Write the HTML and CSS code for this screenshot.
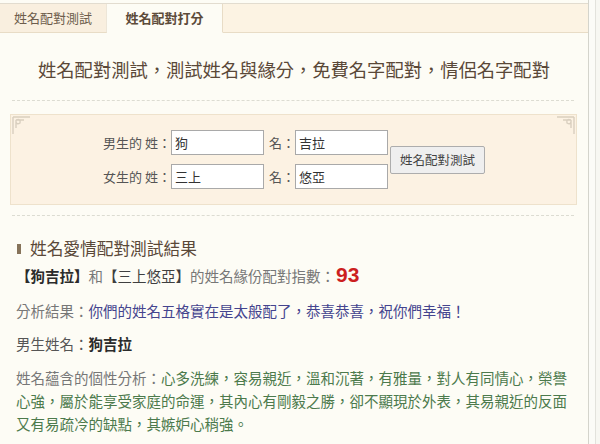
FILE: index.html
```html
<!DOCTYPE html>
<html lang="zh-Hant">
<head>
<meta charset="utf-8">
<title>姓名配對打分</title>
<link rel="stylesheet" href="styles.css">
</head>
<body>
<div class="page">
  <div class="tabs">
    <div class="tab">姓名配對測試</div>
    <div class="tab active">姓名配對打分</div>
    <div class="tab-fill"></div>
  </div>

  <h1 class="title">姓名配對測試，測試姓名與緣分，免費名字配對，情侶名字配對</h1>

  <div class="dash"></div>

  <div class="panel">
    <svg class="corner corner-l" width="20" height="20" viewBox="0 0 20 20"><path d="M1 1 H18 M1 1 V18 M4 4 H12 M4 4 V12 M4 4 Q9 2 8 7 Q5 9 4 6" fill="none" stroke="#d9cfbf" stroke-width="1.4"/></svg>
    <svg class="corner corner-r" width="20" height="20" viewBox="0 0 20 20"><path d="M19 1 H2 M19 1 V18 M16 4 H8 M16 4 V12 M16 4 Q11 2 12 7 Q15 9 16 6" fill="none" stroke="#d9cfbf" stroke-width="1.4"/></svg>
    <form class="form">
      <div class="grid">
        <label class="lbl">男生的 姓：</label>
        <input class="inp" type="text" value="狗">
        <label class="lbl2">名：</label>
        <input class="inp" type="text" value="吉拉">
        <label class="lbl">女生的 姓：</label>
        <input class="inp" type="text" value="三上">
        <label class="lbl2">名：</label>
        <input class="inp" type="text" value="悠亞">
      </div>
      <button class="btn" type="button">姓名配對測試</button>
    </form>
  </div>

  <div class="dash"></div>

  <section class="result">
    <h2 class="heading"><span class="bar"></span>姓名愛情配對測試結果</h2>
    <p class="line"><b class="dark">【狗吉拉】</b><span class="gray">和</span><span class="mid">【三上悠亞】</span><span class="gray">的姓名緣份配對指數：</span><span class="score">93</span></p>
    <p class="line l2"><span class="gray">分析結果：</span><span class="blue">你們的姓名五格實在是太般配了，恭喜恭喜，祝你們幸福！</span></p>
    <p class="line l3"><span class="gray2">男生姓名：</span><b class="dark">狗吉拉</b></p>
    <p class="line para"><span class="gray">姓名蘊含的個性分析：</span><span class="green">心多洗練，容易親近，溫和沉著，有雅量，對人有同情心，榮譽心強，屬於能享受家庭的命運，其內心有剛毅之勝，卻不顯現於外表，其易親近的反面又有易疏冷的缺點，其嫉妒心稍強。</span></p>
  </section>
</div>
</body>
</html>
```

FILE: styles.css
```css
html, body {
  margin: 0;
  padding: 0;
}
body {
  background: #f7f7f2;
  font-family: "Noto Sans CJK TC", "Noto Sans", sans-serif;
  width: 600px;
  height: 444px;
  overflow: hidden;
}
.page {
  width: 589px;
  height: 444px;
  background: #fdfcf5;
  border-right: 1px solid #d4d4cc;
  box-shadow: 6px 0 0 #fbfbf7, 7px 0 0 #e2e2dc;
  padding-top: 3px;
  box-sizing: border-box;
}
.tabs {
  display: flex;
  height: 30px;
  border-top: 1px solid #e2dccf;
  background: #fcf3e3;
  box-sizing: border-box;
}
.tab {
  width: 106px;
  font-size: 13px;
  line-height: 28px;
  text-align: center;
  color: #6d5d4c;
  background: #f9efdf;
  border-right: 1px solid #ede6d8;
  border-bottom: 1px solid #e8dcc6;
}
.tab.active {
  width: 115px;
  background: #fdfcf5;
  font-weight: bold;
  color: #5c4b3a;
  border-right: 1px solid #e8dcc6;
  border-bottom: 1px solid #fdfcf5;
}
.tab-fill {
  flex: 1;
  border-bottom: 1px solid #e8dcc6;
}
.title {
  margin: 24px 0 19px;
  font-size: 18.3px;
  line-height: 24px;
  font-weight: normal;
  color: #5a4838;
  text-align: center;
  letter-spacing: 0;
}
.dash {
  margin: 0 14px 0 12px;
  border-top: 1px dashed #dcdcd2;
}
.panel {
  position: relative;
  margin: 13px 11px 10px 10px;
  height: 91px;
  box-sizing: border-box;
  background: #fcf2e3;
  border: 1px solid #eee2cc;
  padding-top: 15px;
}
.corner {
  position: absolute;
  top: 1px;
}
.corner-l { left: 1px; }
.corner-r { right: 1px; }
.form {
  display: flex;
  align-items: center;
  justify-content: center;
  margin: 0;
  padding-left: 1px;
}
.grid {
  display: grid;
  grid-template-columns: auto 93px auto 93px;
  row-gap: 9px;
  align-items: center;
}
.lbl, .lbl2 {
  font-size: 13px;
  color: #555;
  line-height: 25px;
}
.lbl2 {
  margin-left: 5px;
}
.inp {
  box-sizing: border-box;
  width: 93px;
  height: 25px;
  margin: 0;
  padding: 0 3px;
  border: 1px solid #a9a9a9;
  background: #fff;
  font-family: "Noto Sans CJK TC", sans-serif;
  font-size: 13px;
  color: #333;
  outline: none;
}
.btn {
  box-sizing: border-box;
  margin-left: 2px;
  width: 95px;
  height: 28px;
  padding: 0;
  background: #efefef;
  border: 1px solid #adadad;
  border-radius: 2px;
  font-family: "Noto Sans CJK TC", sans-serif;
  font-size: 12.5px;
  color: #444;
  letter-spacing: 0;
}
.result {
  padding: 20px 10px 0 16px;
}
.heading {
  display: flex;
  align-items: center;
  margin: 0 0 4px;
  font-size: 16.7px;
  line-height: 24px;
  font-weight: normal;
  color: #5a4838;
}
.bar {
  display: inline-block;
  width: 4px;
  height: 10px;
  background: #86735a;
  margin: 2px 9px 0 1px;
}
.line {
  margin: 0 0 12px;
  font-size: 14.5px;
  line-height: 23px;
  color: #666;
}
.l2 {
  margin-bottom: 10px;
}
.l3 {
  margin-bottom: 11px;
}
.dark { color: #2b2b2b; }
.mid { color: #3f3f3f; }
.gray { color: #777; }
.gray2 { color: #555; }
.blue { color: #44448e; }
.green { color: #4c7a4c; }
.score {
  font-size: 21px;
  font-weight: bold;
  color: #cc1f1f;
  font-family: "Liberation Sans", "DejaVu Sans", sans-serif;
  line-height: 20px;
  margin-left: 1px;
}
.para {
  width: 560px;
}
```
